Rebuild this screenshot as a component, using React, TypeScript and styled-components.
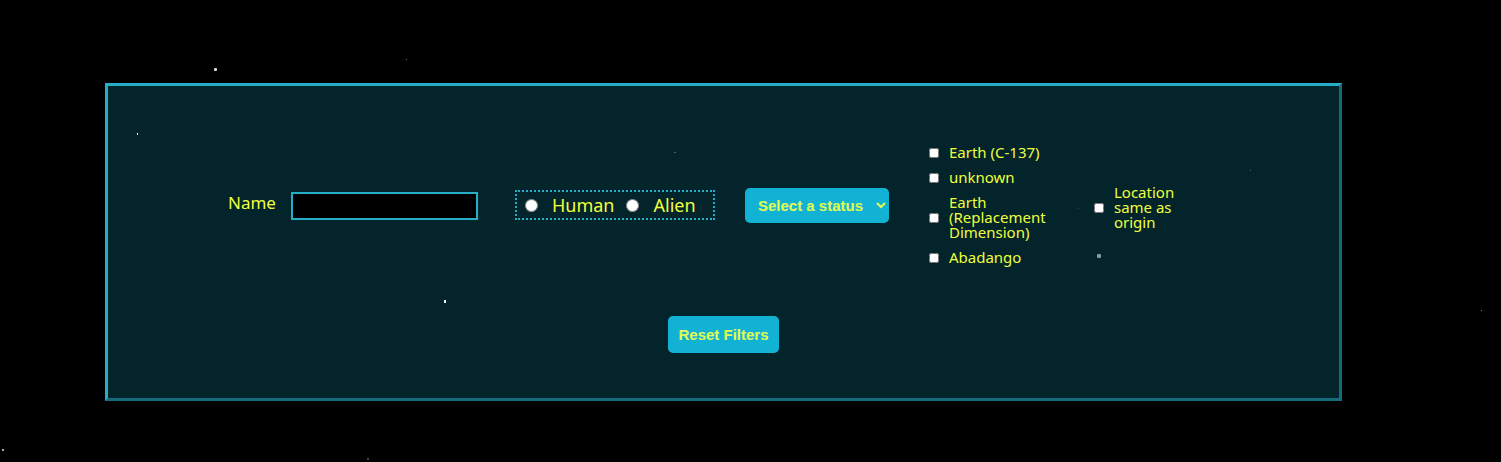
import React, { useState } from "react";
import styled, { createGlobalStyle } from "styled-components";

const GlobalStyle = createGlobalStyle`
  *, *::before, *::after { box-sizing: border-box; }
  body {
    margin: 0;
    background: #000;
    color: #efff3c;
    font-family: "Noto Sans", sans-serif;
  }
`;

const Page = styled.main`
  position: relative;
  min-height: 100vh;
  padding: 83px 159px 61px 105px;
  overflow: hidden;
`;

const Sky = styled.svg`
  position: absolute;
  inset: 0;
  width: 100%;
  height: 100%;
  pointer-events: none;
`;

const Panel = styled.form`
  display: flex;
  flex-direction: column;
  align-items: center;
  gap: 51px;
  padding: 59px 16px 45px;
  background: #03242b;
  border: 3px solid;
  border-color: #28adc7 #166b7b #166b7b #28adc7;
`;

const Filters = styled.div`
  display: flex;
  align-items: center;
  justify-content: center;
`;

const NameField = styled.label`
  display: flex;
  align-items: center;
  gap: 15px;
  margin-right: 37px;
  padding-top: 2px;
  font-size: 17px;
  line-height: 28px;
`;

const NameLabel = styled.span`
  padding-bottom: 6px;
`;

const NameInput = styled.input`
  width: 187px;
  height: 28px;
  padding: 2px 6px;
  background: #000;
  border: 2px solid #28adc7;
  color: inherit;
  font: inherit;
  font-size: 15px;
`;

const SpeciesGroup = styled.fieldset`
  display: flex;
  align-items: center;
  gap: 12px;
  width: 200px;
  height: 30px;
  margin: 0 30px 0 0;
  padding: 0 8px;
  border: 2px dotted #28adc7;
`;

const RadioLabel = styled.label`
  display: flex;
  align-items: center;
  gap: 14px;
  font-size: 18px;
  line-height: 26px;
`;

const Radio = styled.input`
  width: 13px;
  height: 13px;
  margin: 0;
`;

const StatusSelect = styled.select`
  width: 144px;
  height: 35px;
  margin-right: 40px;
  padding: 0 0 0 9px;
  background-color: #12b2d5;
  border: 0;
  border-radius: 5px;
  color: #e2ff50;
  font: bold 15px "Liberation Sans", Arial, sans-serif;
`;

const Origins = styled.div`
  display: flex;
  flex-direction: column;
  gap: 10px;
  width: 125px;
  margin-right: 40px;
`;

const CheckLabel = styled.label`
  display: flex;
  align-items: center;
  gap: 10px;
  font-size: 15px;
  line-height: 15px;
`;

const SameLocation = styled.div`
  width: 125px;
  padding: 5px 40px 0 0;
`;

const Checkbox = styled.input`
  flex: none;
  width: 10px;
  height: 10px;
  margin: 0;
`;

const ResetButton = styled.button`
  width: 111px;
  height: 37px;
  padding: 0;
  background: #12b2d5;
  border: 0;
  border-radius: 5px;
  color: #e2ff50;
  font: bold 15px "Liberation Sans", Arial, sans-serif;
  white-space: nowrap;
`;

const stars = [
  { x: 214, y: 68, w: 3, h: 3, fill: "#d8d8d8" },
  { x: 406, y: 59, w: 1, h: 1, fill: "#666" },
  { x: 137, y: 133, w: 1, h: 2, fill: "#fff" },
  { x: 674, y: 152, w: 2, h: 1, fill: "#4f686c" },
  { x: 1250, y: 170, w: 1, h: 1, fill: "#4f686c" },
  { x: 1078, y: 208, w: 1, h: 1, fill: "#36545a" },
  { x: 1097, y: 254, w: 4, h: 4, fill: "#829a9e" },
  { x: 444, y: 300, w: 2, h: 3, fill: "#e8f2f2" },
  { x: 1481, y: 310, w: 1, h: 1, fill: "#777" },
  { x: 2, y: 449, w: 2, h: 2, fill: "#aaa" },
  { x: 367, y: 458, w: 2, h: 2, fill: "#444" },
];

const origins = ["Earth (C-137)", "unknown", "Earth (Replacement Dimension)", "Abadango"];
const species = ["Human", "Alien"];

export default function App() {
  const [status, setStatus] = useState("");

  return (
    <Page>
      <GlobalStyle />
      <Panel onSubmit={(e) => e.preventDefault()} onReset={() => setStatus("")}>
        <Filters>
          <NameField>
            <NameLabel>Name</NameLabel>
            <NameInput type="text" name="name" />
          </NameField>
          <SpeciesGroup aria-label="Species">
            {species.map((s) => (
              <RadioLabel key={s}>
                <Radio type="radio" name="species" value={s} />
                {s}
              </RadioLabel>
            ))}
          </SpeciesGroup>
          <StatusSelect
            aria-label="Status"
            value={status}
            onChange={(e) => setStatus(e.target.value)}
          >
            <option value="">Select a status</option>
            <option value="alive">Alive</option>
            <option value="dead">Dead</option>
            <option value="unknown">unknown</option>
          </StatusSelect>
          <Origins role="group" aria-label="Origin">
            {origins.map((o) => (
              <CheckLabel key={o}>
                <Checkbox type="checkbox" name="origin" value={o} />
                {o}
              </CheckLabel>
            ))}
          </Origins>
          <SameLocation>
            <CheckLabel>
              <Checkbox type="checkbox" name="sameLocation" />
              Location same as origin
            </CheckLabel>
          </SameLocation>
        </Filters>
        <ResetButton type="reset">Reset Filters</ResetButton>
      </Panel>
      <Sky aria-hidden="true">
        {stars.map((s) => (
          <rect
            key={`${s.x}-${s.y}`}
            x={s.x}
            y={s.y}
            width={s.w}
            height={s.h}
            rx={s.w > 2 ? 1 : 0}
            fill={s.fill}
          />
        ))}
      </Sky>
    </Page>
  );
}
